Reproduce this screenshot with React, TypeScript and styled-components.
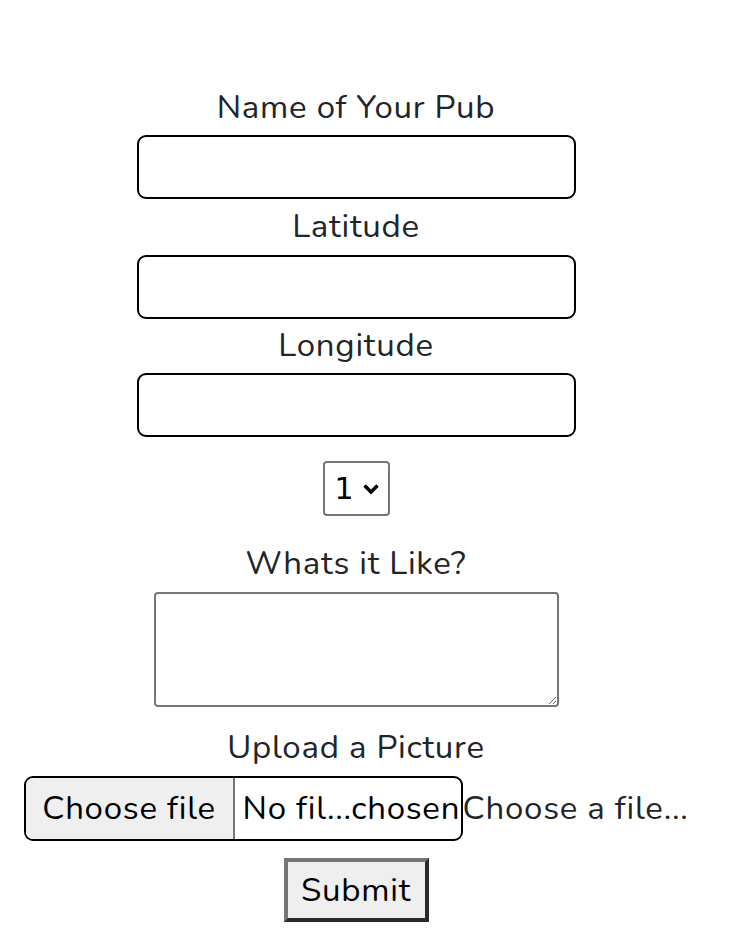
import React from "react";
import styled, { createGlobalStyle } from "styled-components";

const Global = createGlobalStyle`
  html, body { margin: 0; padding: 0; background: #fff; }
  body { font-family: "Nunito", "Lato", "Noto Sans", sans-serif; color: #212529; }
`;

const Form = styled.form`
  display: flex;
  flex-direction: column;
  align-items: center;
  width: 712px;
  padding-top: 80px;
`;

const Label = styled.label<{ $h?: number; $mt?: number }>`
  display: block;
  height: ${(p) => p.$h ?? 56}px;
  line-height: ${(p) => p.$h ?? 56}px;
  margin-top: ${(p) => p.$mt ?? 0}px;
  font-size: 33px;
  letter-spacing: 0.75px;
  font-weight: 400;
  color: #212529;
`;

const TextInput = styled.input`
  box-sizing: border-box;
  width: 439px;
  height: 64px;
  border: 2px solid #000;
  border-radius: 9px;
  background: #fff;
  margin: 0;
`;

const Select = styled.div`
  box-sizing: border-box;
  margin-top: 24px;
  width: 67px;
  height: 55px;
  border: 2px solid #767676;
  border-radius: 4px;
  display: flex;
  align-items: center;
  padding-left: 10px;
  gap: 8px;
  font-family: "DejaVu Sans", sans-serif;
  font-size: 30px;
  color: #000;
`;

const TextArea = styled.textarea`
  box-sizing: border-box;
  width: 405px;
  height: 115px;
  border: 2px solid #767676;
  border-radius: 4px;
  margin: 0;
  resize: both;
`;

const FileRow = styled.div`
  display: flex;
  align-items: center;
  font-size: 33px;
  letter-spacing: 0.75px;
  color: #000;
`;

const FileBox = styled.div`
  box-sizing: border-box;
  width: 439px;
  height: 65px;
  border: 2px solid #000;
  border-radius: 9px;
  display: flex;
  overflow: hidden;
`;

const FileButton = styled.span`
  box-sizing: border-box;
  width: 209px;
  background: #efefef;
  border-right: 2px solid #767676;
  display: flex;
  align-items: center;
  justify-content: center;
`;

const FileName = styled.span`
  display: flex;
  align-items: center;
  padding-left: 8px;
  white-space: nowrap;
`;

const FileHint = styled.span`
  color: #212529;
  white-space: nowrap;
`;

const Submit = styled.button`
  box-sizing: border-box;
  margin-top: 17px;
  width: 145px;
  height: 64px;
  background: #efefef;
  border-style: solid;
  border-width: 4px;
  border-color: #767676 #2b2b2b #2b2b2b #767676;
  font-family: inherit;
  font-size: 33px;
  letter-spacing: 0.75px;
  color: #000;
  padding: 0;
`;

export default function App() {
  return (
    <>
      <Global />
      <Form onSubmit={(e) => e.preventDefault()}>
        <Label $h={55}>Name of Your Pub</Label>
        <TextInput type="text" />
        <Label>Latitude</Label>
        <TextInput type="text" />
        <Label $h={54}>Longitude</Label>
        <TextInput type="text" />
        <Select>
          <span>1</span>
          <svg width="18" height="12" viewBox="0 0 18 12">
            <path d="M2.5 2.5 L9 9 L15.5 2.5" fill="none" stroke="#000" strokeWidth="3.5" />
          </svg>
        </Select>
        <Label $mt={20}>Whats it Like?</Label>
        <TextArea />
        <Label $mt={13}>Upload a Picture</Label>
        <FileRow>
          <FileBox>
            <FileButton>Choose file</FileButton>
            <FileName>No fil...chosen</FileName>
          </FileBox>
          <FileHint>Choose a file...</FileHint>
        </FileRow>
        <Submit type="submit">Submit</Submit>
      </Form>
    </>
  );
}
